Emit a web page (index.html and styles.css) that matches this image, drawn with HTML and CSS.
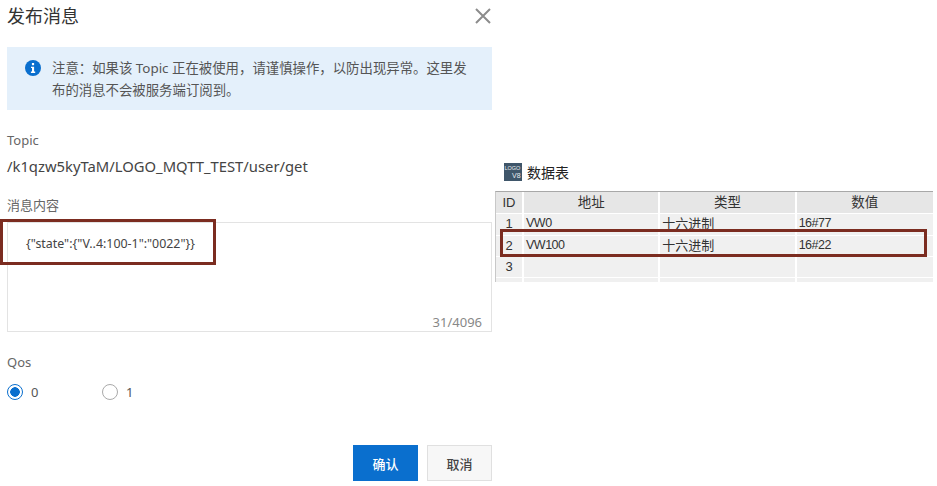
FILE: index.html
```html
<!DOCTYPE html>
<html>

<head>
    <title>发布消息</title>
    <link rel="stylesheet" href="styles.css">
</head>

<body>
    <div class="dialog">
        <div class="dialog-head">
            <h1>发布消息</h1>
            <svg class="close" width="18" height="18" viewBox="0 0 18 18">
                <path d="M2 2L16 16M16 2L2 16" stroke="#8c8c8c" stroke-width="2" fill="none" />
            </svg>
        </div>

        <div class="alert">
            <svg class="alert-icon" width="16" height="16" viewBox="0 0 16 16">
                <circle cx="8" cy="8" r="8" fill="#0a6fce" />
                <rect x="6.9" y="3" width="2.2" height="2.2" fill="#fff" />
                <path d="M6 6.7H9.1V11.6H10.2V13H5.9V11.6H7V8H6Z" fill="#fff" />
            </svg>
            <p>注意&#xFF1A;如果该 Topic 正在被使用&#xFF0C;请谨慎操作&#xFF0C;以防出现异常。这里发布的消息不会被服务端订阅到。</p>
        </div>

        <div class="label topic-label">Topic</div>
        <div class="topic-path">/k1qzw5kyTaM/LOGO_MQTT_TEST/user/get</div>

        <div class="label content-label">消息内容</div>
        <div class="textarea">
            <div class="payload">{"state":{"V..4:100-1":"0022"}}</div>
            <div class="counter">31/4096</div>
        </div>

        <div class="label qos-label">Qos</div>
        <div class="radios">
            <div class="radio-item">
                <span class="radio checked"></span>
                <span>0</span>
            </div>
            <div class="radio-item">
                <span class="radio"></span>
                <span>1</span>
            </div>
        </div>

        <div class="actions">
            <button class="btn primary">确认</button>
            <button class="btn">取消</button>
        </div>
    </div>

    <div class="data-panel">
        <div class="panel-title">
            <svg class="logo" width="18" height="18" viewBox="0 0 18 18">
                <rect width="18" height="18" fill="#3f566a" />
                <text x="0.5" y="7" font-size="5.5" fill="#e8edf0">LOGO</text>
                <text x="8" y="15" font-size="7" fill="#e8edf0">V8</text>
            </svg>
            <span>数据表</span>
        </div>
        <table class="data-table">
            <thead>
                <tr>
                    <th class="col-id">ID</th>
                    <th>地址</th>
                    <th>类型</th>
                    <th>数值</th>
                </tr>
            </thead>
            <tbody>
                <tr>
                    <td class="col-id">1</td>
                    <td class="latin">VW0</td>
                    <td>十六进制</td>
                    <td class="latin">16#77</td>
                </tr>
                <tr>
                    <td class="col-id">2</td>
                    <td class="latin">VW100</td>
                    <td>十六进制</td>
                    <td class="latin">16#22</td>
                </tr>
                <tr>
                    <td class="col-id">3</td>
                    <td></td>
                    <td></td>
                    <td></td>
                </tr>
                <tr class="cut-row">
                    <td class="col-id"></td>
                    <td></td>
                    <td></td>
                    <td></td>
                </tr>
            </tbody>
        </table>
    </div>

    <!-- red highlight boxes drawn over the screenshot -->
    <div class="mark mark-payload"></div>
    <div class="mark mark-row"></div>
</body>

</html>
```

FILE: styles.css
```css
body {
    margin: 0;
    height: 486px;
    overflow: hidden;
    display: flex;
    background-color: #fff;
    color: #333;
    font-family: "Noto Sans", "Noto Sans CJK SC", sans-serif;
    font-size: 13px;
}

.dialog {
    width: 485px;
    margin-left: 7px;
    flex-shrink: 0;
}

.dialog-head {
    height: 47px;
    display: flex;
    justify-content: space-between;
    padding-top: 4px;
    box-sizing: border-box;
}

h1 {
    margin: 0;
    font-size: 18px;
    line-height: 24px;
    font-weight: 400;
}

.close {
    margin-top: 3px;
}

.alert {
    height: 63px;
    box-sizing: border-box;
    background-color: #e4f0fb;
    display: flex;
    padding: 10px 24px 0 18px;
}

.alert-icon {
    flex-shrink: 0;
    margin-top: 3px;
    margin-right: 11px;
}

.alert p {
    margin: 0;
    font-size: 13.4px;
    line-height: 22px;
    color: #555;
}

.label {
    font-size: 13px;
    line-height: 18px;
    color: #666;
}

.topic-label {
    margin-top: 21px;
}

.topic-path {
    margin-top: 7px;
    font-size: 14.8px;
    line-height: 20px;
    color: #444;
}

.content-label {
    margin-top: 20px;
}

.textarea {
    margin-top: 8px;
    height: 110px;
    box-sizing: border-box;
    border: 1px solid #e3e3e3;
    position: relative;
    padding: 12px 18px;
}

.payload {
    font-size: 12.4px;
    line-height: 18px;
    color: #444;
}

.counter {
    position: absolute;
    right: 9px;
    bottom: 0;
    font-size: 13px;
    line-height: 18px;
    color: #888;
}

.qos-label {
    margin-top: 21px;
}

.radios {
    display: flex;
    margin-top: 12px;
}

.radio-item {
    width: 95px;
    display: flex;
    align-items: center;
    gap: 8px;
    font-size: 13px;
    line-height: 18px;
    color: #555;
}

.radio {
    width: 16px;
    height: 16px;
    box-sizing: border-box;
    border: 1px solid #aaa;
    border-radius: 50%;
}

.radio.checked {
    border: 1.5px solid #0a6fce;
    background: radial-gradient(circle, #0a6fce 4.5px, #fff 5px);
}

.actions {
    display: flex;
    justify-content: flex-end;
    gap: 9px;
    margin-top: 44px;
}

.btn {
    width: 65px;
    height: 36px;
    padding: 0;
    border: 1px solid #e0e0e0;
    background-color: #f7f7f7;
    color: #444;
    font-family: inherit;
    font-size: 13px;
    font-weight: 500;
}

.btn.primary {
    border: none;
    background-color: #0a6fce;
    color: #fff;
}

.data-panel {
    margin-left: 3px;
    width: 438px;
    flex-shrink: 0;
}

.panel-title {
    display: flex;
    align-items: center;
    gap: 5px;
    height: 18px;
    margin-top: 163px;
    padding-left: 9px;
    font-size: 14px;
    color: #222;
}

.logo {
    font-family: "Liberation Sans", sans-serif;
}

.data-table {
    margin-top: 10px;
    width: 438px;
    table-layout: fixed;
    border-collapse: separate;
    border-spacing: 0;
    border-top: 1px solid #a8a8a8;
    border-left: 1px solid #c8c8c8;
    font-size: 13px;
    color: #333;
}

.data-table th,
.data-table td {
    padding: 0;
    box-sizing: border-box;
    height: 21px;
    line-height: 19px;
    vertical-align: top;
    border-right: 2px solid #fff;
    border-bottom: 1px solid #fff;
    background-color: #f0f0f0;
    text-align: left;
    overflow: hidden;
}

.data-table th {
    height: 22px;
    line-height: 21px;
    font-weight: 400;
    font-size: 13.5px;
    text-align: center;
    background-color: #e6e6e6;
}

.data-table th:last-child,
.data-table td:last-child {
    border-right: none;
}

.data-table td {
    padding-left: 2px;
}

.data-table tbody tr:first-child td {
    height: 22px;
}

.data-table .latin {
    font-family: "Liberation Sans", sans-serif;
    font-size: 12.5px;
    letter-spacing: -0.5px;
}

.data-table .col-id {
    width: 28px;
    padding: 0;
    text-align: center;
    font-family: "Liberation Sans", sans-serif;
    font-size: 13px;
}

.data-table .cut-row td {
    height: 4px;
    line-height: 4px;
    border-bottom: none;
}

.mark {
    position: absolute;
    box-sizing: border-box;
    border: 3px solid #7b2c20;
}

.mark-payload {
    left: 0;
    top: 219px;
    width: 216px;
    height: 46px;
}

.mark-row {
    left: 500px;
    top: 229px;
    width: 427px;
    height: 28px;
}
```
